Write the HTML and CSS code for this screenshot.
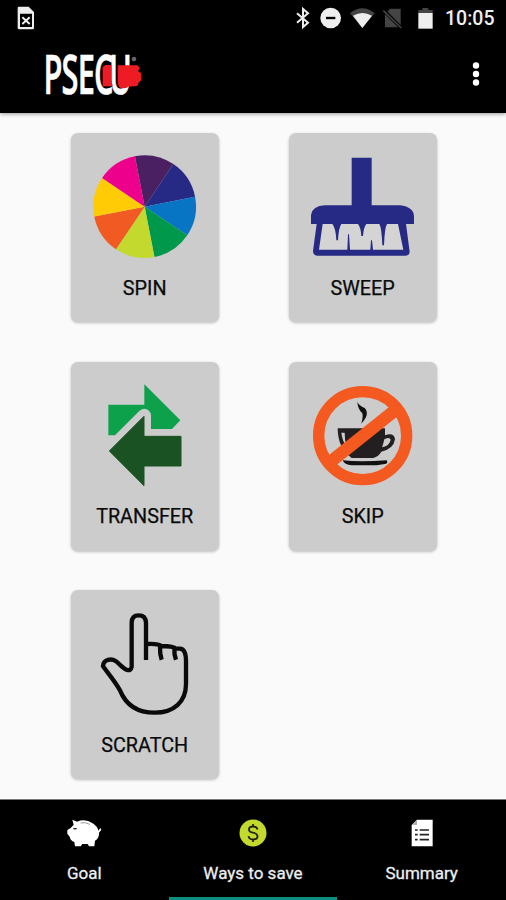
FILE: index.html
```html
<!DOCTYPE html>
<html lang="en">
<head>
<meta charset="utf-8">
<title>Ways to save</title>
<link rel="stylesheet" href="styles.css">
</head>
<body>
<div class="app">
  <header class="top">
    <div class="status">
      <svg class="sim" width="18" height="24" viewBox="51 16 54 72"><path fill="#eee" fill-rule="evenodd" d="M57 18H86L102 34V82Q102 86 98 86H57Q53 86 53 82V22Q53 18 57 18ZM60 39V79H96V39Z"/><path d="M67 50L89 70M89 50L67 70" stroke="#eee" stroke-width="6"/></svg>
      <svg class="status-icons" width="146" height="24" viewBox="120 16 438 72">
        <path d="M129 38L162 66L147 79V25L162 38L129 66" fill="none" stroke="#eee" stroke-width="6"/>
        <circle cx="230" cy="52" r="31" fill="#eee"/><path d="M216 52H244" stroke="#000" stroke-width="7"/>
        <path d="M288 38Q325 8 362 38L325 82Z" fill="#444"/><path d="M297 45Q325 29 354 45L325 82Z" fill="#eee"/>
        <path d="M408 24H440V80H393V40Z" fill="#444"/><path d="M385 25L442 82" stroke="#000" stroke-width="10"/><path d="M388 30L442 82" stroke="#444" stroke-width="5"/>
        <path d="M505 22H523V28H536V38H493V28H505Z" fill="#444"/><path d="M493 37H536V84H493Z" fill="#eee"/>
      </svg>
      <span class="time">10:05</span>
    </div>
    <div class="bar">
      <svg class="logo" width="104" height="48" viewBox="132 156 312 144">
        <text class="wordmark" transform="translate(133 283) scale(.57 1)" x="-5 91 176 262 341">PSECU</text>
        <path fill="#ed1c24" d="M308 202L316 195H334V240Q335 252 339 259H308ZM353 196H412L420 204L414 213L424 220V240L416 248L412 258L384 260Q380 265 364 265Q353 262 353 240Z"/>
        <circle cx="402" cy="177" r="7" fill="#666"/>
      </svg>
      <svg class="more" width="10" height="26" viewBox="0 0 10 26" fill="#fff"><circle cx="5" cy="4.500" r="3.200"/><circle cx="5" cy="13" r="3.200"/><circle cx="5" cy="21.500" r="3.200"/></svg>
    </div>
  </header>

  <main class="grid">
    <section class="card">
      <svg class="art" viewBox="33 24 444 408"><g transform="translate(254 245) rotate(-11)">
        <path fill="#4b2063" d="M0 0V-154A154 154 0 0 1 108.900-108.900Z"/>
        <path fill="#262a85" d="M0 0L108.900-108.900A154 154 0 0 1 154 0Z"/>
        <path fill="#0874c4" d="M0 0H154A154 154 0 0 1 108.900 108.900Z"/>
        <path fill="#00984a" d="M0 0L108.900 108.900A154 154 0 0 1 0 154Z"/>
        <path fill="#c4d92e" d="M0 0V154A154 154 0 0 1-108.900 108.900Z"/>
        <path fill="#f15a22" d="M0 0L-108.900 108.900A154 154 0 0 1-154 0Z"/>
        <path fill="#ffcb05" d="M0 0H-154A154 154 0 0 1-108.900-108.900Z"/>
        <path fill="#ec008c" d="M0 0L-108.900-108.900A154 154 0 0 1 0-154Z"/></g></svg>
      <h2 class="label">SPIN</h2>
    </section>
    <section class="card">
      <svg class="art" viewBox="27 24 444 408">
        <path fill="#262a85" d="M215 98H275V241H360Q402 246 402 275V297H378L389 380Q388 392 376 392H112Q99 391 99 378L110 297H93V270Q97 243 135 241H215Z"/>
        <path fill="#d4d4d4" d="M128 297H157Q167 308 169 346H174Q176 308 184 297H234Q242 306 244 333H249Q251 306 259 297H298Q305 308 307 361H312Q314 308 321 297H354L370 374H279L276 346H273L271 374H210L207 328H204L202 374H117Z"/>
      </svg>
      <h2 class="label">SWEEP</h2>
    </section>
    <section class="card">
      <svg class="art" viewBox="33 20 444 408">
        <path fill="#0ea14b" d="M145 148H253V87L361 195L336 221H273V180Q270 160 252 160Q244 160 237 168L165 240H145Z"/>
        <path fill="#1b5223" stroke="#1b5223" stroke-width="3" stroke-linejoin="round" d="M148 287L252 183V243H363V332H252V391Z"/>
      </svg>
      <h2 class="label">TRANSFER</h2>
    </section>
    <section class="card">
      <svg class="art" viewBox="27 20 444 408">
        <path fill="#111" d="M232 139Q237 151 254 158Q271 176 244 205Q250 184 247 174Q233 161 232 139Z"/>
        <path fill="#231f20" d="M173 219H315V240Q342 230 345 252Q341 281 304 289Q296 303 280 308H215Q173 278 173 219ZM184 232Q187 258 201 276Q193 252 194 232ZM313 252Q310 266 306 276Q330 270 332 253Q329 244 313 252Z" fill-rule="evenodd"/>
        <path fill="#111" d="M188 315Q240 321 320 315Q325 320 319 325L290 330H215Q193 328 188 315Z"/>
        <circle cx="248" cy="241" r="132" fill="none" stroke="#f4591f" stroke-width="34"/>
        <path d="M157 315L341 168" stroke="#f4591f" stroke-width="38"/>
      </svg>
      <h2 class="label">SKIP</h2>
    </section>
    <section class="card">
      <svg class="art" viewBox="33 24 444 408">
        <path d="M258 234V122Q257 100 236 100Q215 100 215 122V254Q212 267 202 264C190 260 180 247 168 238C155 229 130 230 129 253C145 275 163 295 180 325C195 362 227 392 284 392C341 392 378 360 378 306V238Q378 201 360 200H347Q341 192 304 192Q295 184 260 186M300 192Q299 216 305 233M343 198Q342 217 348 233" fill="none" stroke="#0a0a0a" stroke-width="13"/>
      </svg>
      <h2 class="label">SCRATCH</h2>
    </section>
  </main>

  <nav class="tabs">
    <a class="tab">
      <svg class="tab-icon" width="36" height="28" viewBox="200 86 108 84"><path fill="#fff" d="M219 88L233 94Q258 84 280 99Q295 109 297 121L303 113L306 118L299 127Q300 144 287 151L285 168H269L265 161H249L244 168H227L225 155Q213 150 211 139L204 130V119L214 113L223 103Z"/><path d="M222 115H232" stroke="#222" stroke-width="4"/><path d="M244 98Q258 94 271 102" stroke="#999" stroke-width="3" fill="none"/></svg>
      <span class="tab-label">Goal</span>
    </a>
    <a class="tab active">
      <svg class="tab-icon" width="28" height="28" viewBox="0 0 28 28"><circle cx="14" cy="14" r="13.500" fill="#c4d92e"/><path d="M18.500 10.500Q18 7.500 14 7.500Q10 7.500 10 10.500Q10 13 14 13.700Q18.500 14.500 18.500 17.500Q18.500 20.500 14 20.500Q10 20.500 9.500 17.200M14 5V8M14 20V23" stroke="#202510" stroke-width="1.800" fill="none"/></svg>
      <span class="tab-label">Ways to save</span>
    </a>
    <a class="tab">
      <svg class="tab-icon" width="28" height="28" viewBox="466 86 84 84"><path fill="#fff" d="M493 88H540V168H477V104Z"/><path fill="#aaa" d="M478 103L493 89V104Z"/><path d="M487 119H495M487 133H495M487 148H495M501 119H529M501 133H529M501 148H529" stroke="#222" stroke-width="5"/></svg>
      <span class="tab-label">Summary</span>
    </a>
  </nav>
</div>
</body>
</html>
```
FILE: styles.css
```css
* { box-sizing: border-box; }
body { margin: 0; background: #fafafa; font-family: Roboto, sans-serif; }
.app { display: flex; flex-direction: column; height: 900px; width: 506px; }
.top { height: 113px; background: #000; box-shadow: 0 1px 4px rgba(0,0,0,.4); }
.status { display: flex; height: 36px; padding: 6px 10px 0 17px; }
.status-icons { margin-left: auto; }
.time { color: #eee; font-size: 19.5px; font-weight: 500; line-height: 26px; width: 51px; margin-left: 5px; white-space: nowrap; }
.bar { display: flex; justify-content: space-between; padding: 16px 25px 0 44px; }
.logo { overflow: visible; }
.wordmark { font-family: "Open Sans", sans-serif; font-size: 162px; font-weight: 600; fill: #fff; stroke: #fff; stroke-width: 2px; }
.more { margin-top: 9px; }
.grid { flex: 1; display: grid; grid-template-columns: 148px 148px; grid-auto-rows: 189px; gap: 39.7px 70px; padding: 20px 0 0 70.7px; align-content: start; }
.card { background: #ccc; border-radius: 7px; box-shadow: 0 1px 3px rgba(0,0,0,.25); text-align: center; }
.art { display: block; width: 148px; height: 136px; }
.label { margin: 5.7px 0 0; font-size: 19.8px; font-weight: 400; line-height: 28px; color: #0a0a0a; -webkit-text-stroke: .25px #0a0a0a; }
.tabs { display: grid; grid-template-columns: repeat(3, 1fr); height: 101px; background: #000; border-top: 1px solid #777; }
.tab { display: flex; flex-direction: column; align-items: center; padding-top: 19px; color: #eee; }
.tab.active { border-bottom: 3px solid #0b8f7f; }
.tab-label { font-size: 17px; line-height: 24px; margin-top: 14px; -webkit-text-stroke: .3px #eee; }
```
